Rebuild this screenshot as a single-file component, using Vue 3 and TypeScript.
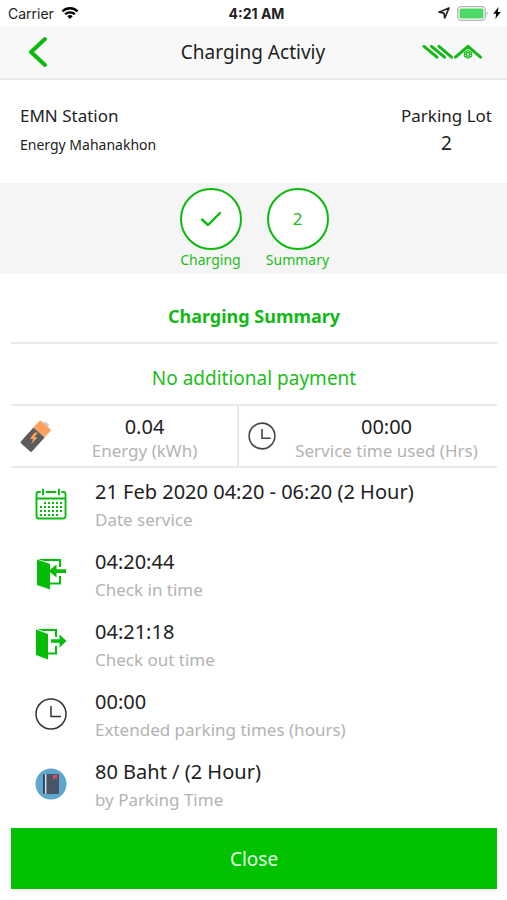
<script setup lang="ts">
interface Detail {
  icon: 'calendar' | 'checkin' | 'checkout' | 'clock' | 'book'
  value: string
  label: string
}

const details: Detail[] = [
  { icon: 'calendar', value: '21 Feb 2020 04:20 - 06:20 (2 Hour)', label: 'Date service' },
  { icon: 'checkin', value: '04:20:44', label: 'Check in time' },
  { icon: 'checkout', value: '04:21:18', label: 'Check out time' },
  { icon: 'clock', value: '00:00', label: 'Extended parking times (hours)' },
  { icon: 'book', value: '80 Baht / (2 Hour)', label: 'by Parking Time' },
]

// Dots of the calendar sheet, as [column, row] pairs
const calendarDots: [number, number][] = []
for (let row = 0; row < 4; row++) {
  for (let col = 0; col < 6; col++) {
    if ((row === 0 && col === 0) || (row === 3 && col === 5)) continue
    calendarDots.push([col, row])
  }
}
</script>

<template>
  <div class="screen">
    <div class="status">
      <div class="status-side">
        <span>Carrier</span>
        <svg width="18" height="14" viewBox="0 0 18 14" fill="none" stroke="#000" stroke-width="2.3">
          <path d="M1.4 5.3a11 11 0 0 1 15.2 0" />
          <path d="M4.1 8.3a7 7 0 0 1 9.8 0" />
          <path d="M9 13l-2.7-2.8a4 4 0 0 1 5.4 0z" fill="#000" stroke="none" />
        </svg>
      </div>
      <strong class="time">4:21 AM</strong>
      <div class="status-side right">
        <svg class="location" width="12" height="12" viewBox="0 0 12 12" fill="none" stroke="#222" stroke-width="1.7" stroke-linejoin="round">
          <path d="M11 1L1 5.200l4.900.900.900 4.900z" />
        </svg>
        <svg width="32" height="15" viewBox="0 0 32 15">
          <rect x=".7" y=".7" width="27.6" height="13.6" rx="3.5" fill="#fff" stroke="#b5b5b5" stroke-width="1.3" />
          <rect x="2.5" y="2.5" width="24" height="10" rx="1.5" fill="#4cd964" />
          <path d="M29.6 5.2q2 2.3 0 4.6z" fill="#aaa" />
        </svg>
        <svg width="8" height="12" viewBox="0 0 8 12"><path d="M5.5 0L.2 6.8h3L2.3 12l5.500-7.100H4.700z" fill="#000" /></svg>
      </div>
    </div>

    <header class="header">
      <button class="back" type="button" aria-label="Back">
        <svg width="20" height="32" viewBox="0 0 20 32" fill="none" stroke="#0abb0e" stroke-width="4" stroke-linecap="round" stroke-linejoin="round">
          <path d="M17 3L3 16l14 13" />
        </svg>
      </button>
      <h1>Charging Activiy</h1>
      <svg class="logo" width="60" height="16" viewBox="0 0 60 16" fill="none" stroke="#12b916" stroke-width="2.9" stroke-linecap="round" stroke-linejoin="round">
        <path d="M2 2.300l13 10.900M9.500 2.300l13 10.900M17 2.300l12.500 10.900M33.500 13.200L46 2.300 58.500 13.200" />
        <g stroke-width="1.1">
          <circle cx="46" cy="7.600" r="1.300" /><circle cx="48.500" cy="9" r="1.300" />
          <circle cx="48.500" cy="11.600" r="1.300" /><circle cx="46" cy="13" r="1.300" />
          <circle cx="43.500" cy="11.600" r="1.300" /><circle cx="43.500" cy="9" r="1.300" />
        </g>
      </svg>
    </header>

    <section class="station">
      <div>
        <p class="place">EMN Station</p>
        <p class="address">Energy Mahanakhon</p>
      </div>
      <div class="lot">
        <p class="place">Parking Lot</p>
        <p class="lot-number">2</p>
      </div>
    </section>

    <ol class="steps">
      <li>
        <span class="circle">
          <svg width="22" height="16" viewBox="0 0 22 16" fill="none" stroke="#0abb0e" stroke-width="2.4" stroke-linecap="round" stroke-linejoin="round">
            <path d="M2 8.500l6 5.500L20 2" />
          </svg>
        </span>
        <span>Charging</span>
      </li>
      <li>
        <span class="circle">2</span>
        <span>Summary</span>
      </li>
    </ol>

    <main class="summary">
      <h2>Charging Summary</h2>
      <p class="payment">No additional payment</p>

      <div class="metrics">
        <div class="metric">
          <svg width="32" height="32" viewBox="0 0 32 32">
            <g transform="translate(15 17) rotate(42)">
              <rect x="-2.800" y="-18.500" width="5.600" height="5" rx="1" fill="#c8cdd2" />
              <path d="M-7.500-14.500q0-1.500 1.500-1.500H6q1.500 0 1.500 1.500V-6h-15z" fill="#fca05b" />
              <path d="M-7.500-6h15v18.500Q7.500 14 6 14H-6q-1.500 0-1.500-1.500z" fill="#5c5c5e" />
            </g>
            <path d="M14.500 12.500l-4.500 6.200 3.200.2-2 5.100 6.300-6.600-3.200-.4 3.700-4.200z" fill="#fca05b" />
          </svg>
          <div class="metric-text">
            <p class="value">0.04</p>
            <p class="label">Energy (kWh)</p>
          </div>
        </div>
        <div class="metric duration">
          <svg width="28" height="28" viewBox="0 0 32 32" fill="none" stroke="#444" stroke-width="1.800">
            <circle cx="16" cy="16" r="14.700" />
            <path d="M16 8v10.500h10" />
          </svg>
          <div class="metric-text">
            <p class="value">00:00</p>
            <p class="label">Service time used (Hrs)</p>
          </div>
        </div>
      </div>

      <ul class="details">
        <li v-for="item in details" :key="item.label">
          <svg v-if="item.icon === 'calendar'" width="32" height="32" viewBox="0 0 32 32" fill="none" stroke="#0abb0e" stroke-width="1.900" stroke-linecap="round">
            <path d="M5 4H3.500Q1.500 4 1.500 6v22q0 2.500 2.500 2.500h24q2.500 0 2.500-2.500V6q0-2-2-2H27M11.500 4h9M1.500 10.500h29M8 1.500v5M24 1.500v5" />
            <g fill="#0abb0e" stroke="none">
              <rect v-for="[col, row] in calendarDots" :key="`${col}-${row}`" :x="5 + col * 4" :y="14 + row * 4" width="2" height="2" />
            </g>
          </svg>
          <svg v-else-if="item.icon === 'checkin'" width="32" height="32" viewBox="0 0 32 32" fill="#05bd08">
            <path d="M2 1.500L15 6v25.500L2 27z" />
            <path d="M3 1h23v8h-2V3H9z" />
            <path d="M24 18h2v8.500H15v-2h9z" />
            <path d="M13.500 13l8-6.500v4.800H31v3.600h-9.500v4.600z" />
          </svg>
          <svg v-else-if="item.icon === 'checkout'" width="32" height="32" viewBox="0 0 32 32" fill="#05bd08">
            <path d="M1 1.500L13 6v25.500L1 27z" />
            <path d="M2 1h20v8h-2V3H8z" />
            <path d="M20 18h2v8.500h-9v-2h7z" />
            <path d="M16 11.200h8.500V6.500L31.500 13l-7 6.500v-4.700H16z" />
          </svg>
          <svg v-else-if="item.icon === 'clock'" width="32" height="32" viewBox="0 0 32 32" fill="none" stroke="#333" stroke-width="1.500">
            <circle cx="16" cy="16" r="15" />
            <path d="M16 8v10.500h10" />
          </svg>
          <svg v-else width="32" height="32" viewBox="0 0 32 32">
            <circle cx="16" cy="16" r="15.500" fill="#60a5cd" />
            <path d="M8 6.500h2v19H8z" fill="#394656" />
            <path d="M10 6.500h1.500v19H10z" fill="#e4e8ea" />
            <rect x="11.500" y="6" width="12.500" height="20" rx="1" fill="#48566a" />
            <path d="M18 7h4v4.500l-2-1.500-2 1.500z" fill="#e34b54" />
          </svg>
          <div>
            <p class="value">{{ item.value }}</p>
            <p class="label">{{ item.label }}</p>
          </div>
        </li>
      </ul>

      <button class="close" type="button">Close</button>
    </main>
  </div>
</template>

<style>
body {
  margin: 0;
  background: #fff;
}
</style>

<style scoped>
.screen {
  font-family: "Noto Sans", "Open Sans", sans-serif;
  color: #222;
}
.screen * {
  box-sizing: border-box;
}
p, h1, h2, ol, ul {
  margin: 0;
  padding: 0;
}
ol, ul {
  list-style: none;
}
svg {
  display: block;
  flex: none;
}
.status {
  display: grid;
  grid-template-columns: 1fr auto 1fr;
  align-items: center;
  height: 26px;
  padding: 0 6px 0 8px;
  font-family: Inter, Roboto, sans-serif;
  font-size: 14px;
}
.status-side {
  display: flex;
  align-items: center;
  gap: 7px;
}
.right {
  justify-content: flex-end;
  gap: 4px;
}
.location {
  margin-right: 3px;
}
.time {
  padding-left: 4px;
  font-weight: 700;
}
.header {
  display: grid;
  grid-template-columns: 80px 1fr 80px;
  align-items: center;
  height: 54px;
  padding: 0 25px 0 24px;
  background: #f8f8f8;
  border-bottom: 2px solid #e8e8e8;
}
.back {
  justify-self: start;
  padding: 0 4px;
  border: 0;
  background: none;
}
h1 {
  font-size: 19px;
  font-weight: 400;
  line-height: 28px;
  text-align: center;
}
.logo {
  justify-self: end;
}
.station {
  display: flex;
  justify-content: space-between;
  height: 103px;
  padding: 22px 15px 0 20px;
}
.place {
  font-size: 17px;
  line-height: 28px;
}
.address {
  font-size: 14px;
  line-height: 30px;
}
.lot {
  text-align: center;
}
.lot-number {
  font-size: 19px;
  line-height: 26px;
}
.steps {
  display: flex;
  justify-content: center;
  gap: 22px;
  height: 91px;
  padding: 5px 0 0 1px;
  background: #f5f5f5;
  color: #1dbd20;
  font-size: 14px;
  line-height: 20px;
}
.steps li {
  display: flex;
  flex-direction: column;
  align-items: center;
  width: 65px;
}
.circle {
  display: flex;
  align-items: center;
  justify-content: center;
  width: 62px;
  height: 62px;
  flex: none;
  border: 2px solid #0abb0e;
  border-radius: 50%;
  background: #fff;
  font-size: 17px;
}
.summary {
  padding: 0 10px 11px 11px;
}
h2 {
  padding: 28px 0 12px;
  border-bottom: 2px solid #e8e8e8;
  color: #12b916;
  font-size: 18px;
  line-height: 28px;
  font-weight: 700;
  text-align: center;
}
.payment {
  padding: 20px 0 12px;
  color: #1dbd20;
  font-size: 19px;
  line-height: 28px;
  text-align: center;
}
.metrics {
  display: grid;
  grid-template-columns: 226px 1fr;
  height: 64px;
  border-top: 2px solid #e8e8e8;
  border-bottom: 2px solid #e8e8e8;
}
.metric {
  display: flex;
  align-items: center;
  padding-left: 9px;
}
.duration {
  border-left: 2px solid #e8e8e8;
}
.metric-text {
  flex: 1;
  padding-top: 6px;
  text-align: center;
}
.value {
  font-size: 20px;
  line-height: 24px;
  color: #222;
}
.label {
  font-size: 17px;
  line-height: 24px;
  color: #b3b3b3;
}
.details li {
  display: flex;
  align-items: center;
  gap: 28px;
  height: 70px;
  padding: 2px 0 0 24px;
}
.details .value {
  padding-top: 4px;
  line-height: 28px;
}
.details .label {
  line-height: 28px;
}
.close {
  display: block;
  width: 100%;
  height: 61px;
  margin-top: 10px;
  border: 0;
  background: #00c200;
  color: #e3ffe3;
  font: inherit;
  font-size: 19px;
}
</style>
